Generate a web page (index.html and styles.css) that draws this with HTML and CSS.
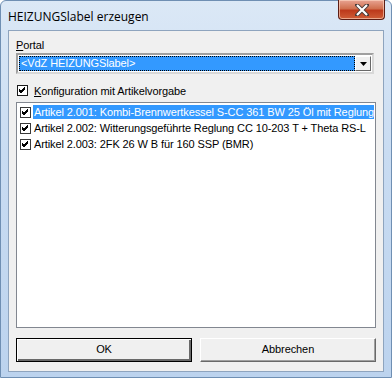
FILE: index.html
```html
<!DOCTYPE html>
<html lang="de">
<head>
    <meta charset="UTF-8">
    <title>HEIZUNGSlabel erzeugen</title>
    <link rel="stylesheet" href="styles.css">
</head>
<body>
<div class="window">
    <div class="titlebar">
        <span class="title">HEIZUNGSlabel erzeugen</span>
        <div class="close">
            <svg width="14" height="12" viewBox="0 0 14 12">
                <path d="M2 1 L12 11 M12 1 L2 11" stroke="#4a3c3a" stroke-width="4" stroke-linecap="square"/>
                <path d="M2 1 L12 11 M12 1 L2 11" stroke="#fff" stroke-width="2.2"/>
            </svg>
        </div>
    </div>
    <div class="client">
        <div class="label"><u>P</u>ortal</div>
        <div class="combo">
            <div class="combo-value">&lt;VdZ HEIZUNGSlabel&gt;</div>
            <div class="combo-btn">
                <svg width="7" height="4" viewBox="0 0 7 4"><path d="M0 0 H7 L3.5 4 Z" fill="#000"/></svg>
            </div>
        </div>
        <div class="check-row">
            <span class="box"></span>
            <span><u>K</u>onfiguration mit Artikelvorgabe</span>
        </div>
        <div class="list">
            <div class="item">
                <span class="box"></span>
                <span class="text selected">Artikel 2.001: Kombi-Brennwertkessel S-CC 361 BW 25 Öl mit Reglung CC 10-203 T</span>
            </div>
            <div class="item">
                <span class="box"></span>
                <span class="text">Artikel 2.002: Witterungsgeführte Reglung CC 10-203 T + Theta RS-L</span>
            </div>
            <div class="item">
                <span class="box"></span>
                <span class="text">Artikel 2.003: 2FK 26 W B für 160 SSP (BMR)</span>
            </div>
        </div>
        <div class="buttons">
            <div class="btn default">OK</div>
            <div class="btn">Abbrechen</div>
        </div>
    </div>
</div>
</body>
</html>
```
FILE: styles.css
```css
* {
    margin: 0;
    padding: 0;
    box-sizing: border-box;
}
body {
    width: 392px;
    height: 378px;
    overflow: hidden;
    background: #fff;
    font-family: "Liberation Sans", Arial, sans-serif;
    font-size: 11px;
    letter-spacing: -0.1px;
    color: #000;
}
.window {
    width: 392px;
    height: 378px;
    display: flex;
    flex-direction: column;
    background: linear-gradient(180deg, #dbe8f6 0%, #c9dcf2 40%, #bcd3ee 100%);
    border: 1px solid #6f8fb3;
    border-radius: 6px 6px 0 0;
    padding: 0 7px 5px 7px;
}
.titlebar {
    height: 29px;
    flex: none;
    display: flex;
    align-items: flex-start;
    justify-content: space-between;
}
.title {
    font-family: "Open Sans", "Noto Sans", sans-serif;
    font-size: 12px;
    letter-spacing: 0;
    margin-top: 7px;
    color: #000;
}
.close {
    width: 47px;
    height: 20px;
    margin-top: -1px;
    margin-right: -1px;
    border: 1px solid #5c1d14;
    border-top: none;
    border-radius: 0 0 4px 4px;
    background: linear-gradient(180deg, #e8a493 0%, #d0704f 45%, #bd3a1c 55%, #cf5d37 100%);
    box-shadow: inset 0 0 0 1px rgba(255, 220, 200, 0.6);
    display: flex;
    align-items: center;
    justify-content: center;
}
.client {
    flex: 1;
    background: #f0f0f0;
    border: 1px solid #8ea4be;
    padding: 8px 7px 9px 7px;
    display: flex;
    flex-direction: column;
}
.client > * {
    flex: none;
}
.label {
    height: 13px;
    line-height: 13px;
}
.combo {
    margin-top: 1px;
    height: 21px;
    width: 358px;
    border: 2px solid #a0a0a0;
    border-right-color: #d8d8d8;
    border-bottom-color: #d8d8d8;
    background: #fff;
    display: flex;
    padding: 1px;
}
.combo-value {
    flex: 1;
    background: #3399ff;
    color: #fff;
    outline: 1px dotted #000;
    outline-offset: -1px;
    line-height: 15px;
    padding-left: 2px;
}
.combo-btn {
    width: 16px;
    border: 1px solid;
    border-color: #fff #696969 #696969 #fff;
    background: #f0f0f0;
    display: flex;
    align-items: center;
    justify-content: center;
}
.check-row {
    margin-top: 10px;
    height: 13px;
    display: flex;
    align-items: center;
    gap: 6px;
    padding-left: 1px;
}
.box {
    width: 11px;
    height: 11px;
    border: 1px solid #1c1c1c;
    background: #fff url("data:image/svg+xml,%3Csvg xmlns='http://www.w3.org/2000/svg' width='9' height='9'%3E%3Cpath d='M1 4 L3 6 L7 2 M1 5 L3 7 L7 3 M1 3 L3 5 L7 1' stroke='%23000' fill='none' stroke-width='1'/%3E%3C/svg%3E") no-repeat center;
    flex: none;
}
.list {
    margin-top: 5px;
    height: 226px;
    width: 360px;
    background: #fff;
    border: 1px solid #828790;
    padding: 1px;
    overflow: hidden;
}
.item {
    height: 16px;
    display: flex;
    align-items: center;
    gap: 2px;
    padding-left: 2px;
    white-space: nowrap;
}
.item .box {
    border-color: #3a3a3a;
}
.text {
    flex: 1;
    line-height: 14px;
    padding-left: 1px;
    overflow: hidden;
}
.selected {
    background: #3399ff;
    color: #fff;
}
.buttons {
    margin-top: 10px;
    display: flex;
    gap: 8px;
}
.btn {
    width: 176px;
    height: 24px;
    line-height: 21px;
    text-align: center;
    background: #f0f0f0;
    border: 1px solid;
    border-color: #fff #696969 #696969 #fff;
    box-shadow: inset -1px -1px 0 #a0a0a0;
}
.btn.default {
    border: 1px solid #000;
    box-shadow: inset 1px 1px 0 #fff, inset -2px -2px 0 #696969;
}
```
